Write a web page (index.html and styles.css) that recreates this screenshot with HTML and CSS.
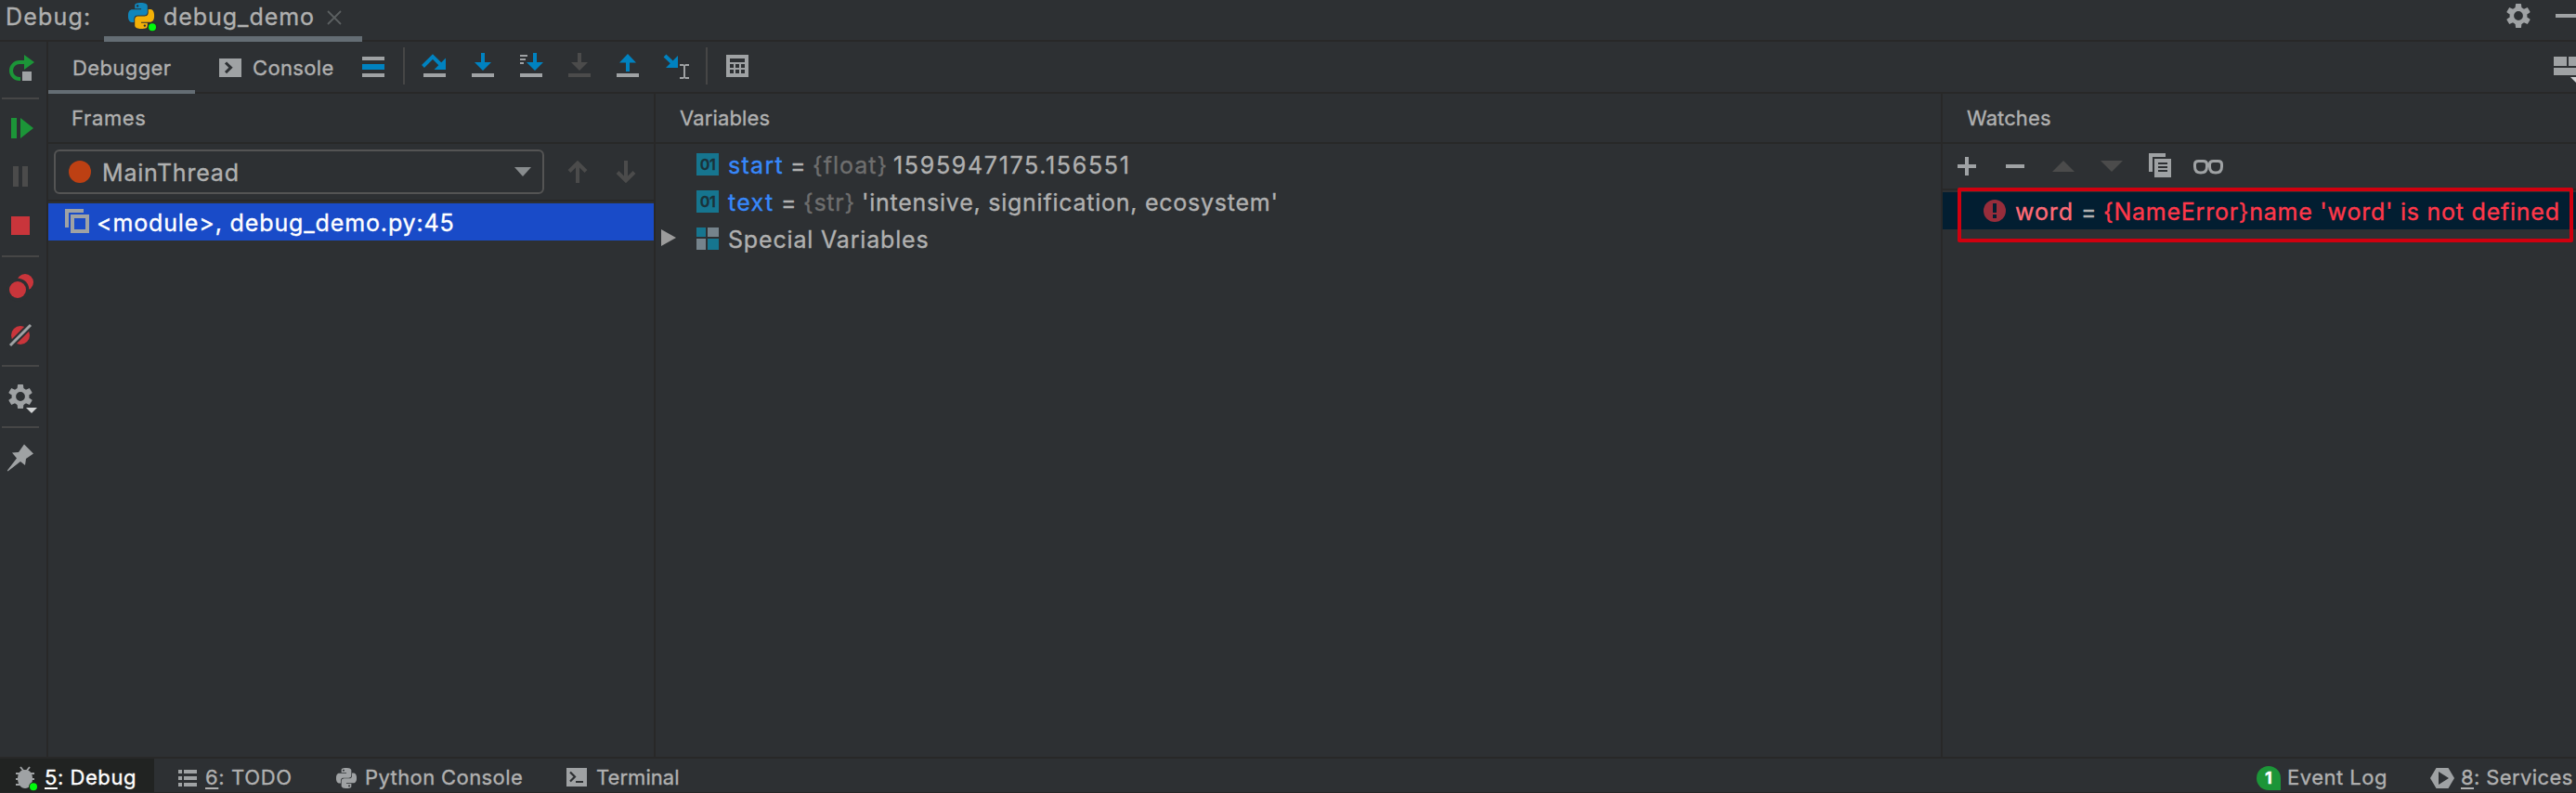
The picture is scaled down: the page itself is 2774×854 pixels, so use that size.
FILE: index.html
```
<!DOCTYPE html>
<html lang="en">
<head>
<meta charset="utf-8">
<title>Debug</title>
<link rel="stylesheet" href="styles.css">
</head>
<body>
<svg class="defs" width="0" height="0">
  <defs>
    <path id="snake" d="M14.25.18l.9.2.73.26.59.3.45.32.34.34.25.34.16.33.1.3.04.26.02.2-.01.13V8.5l-.05.63-.13.55-.21.46-.26.38-.3.31-.33.25-.35.19-.35.14-.33.1-.3.07-.26.04-.21.02H8.77l-.69.05-.59.14-.5.22-.41.27-.33.32-.27.35-.2.36-.15.37-.1.35-.07.32-.04.27-.02.21v3.06H3.17l-.21-.03-.28-.07-.32-.12-.35-.18-.36-.26-.36-.36-.35-.46-.32-.59-.28-.73-.21-.88-.14-1.05-.05-1.23.06-1.22.16-1.04.24-.87.32-.71.36-.57.4-.44.42-.33.42-.24.4-.16.36-.1.32-.05.24-.01h.16l.06.01h8.16v-.83H6.18l-.01-2.75-.02-.37.05-.34.11-.31.17-.28.25-.26.31-.23.38-.2.44-.18.51-.15.58-.12.64-.1.71-.06.77-.04.84-.02 1.27.05zm-6.3 1.98l-.23.33-.08.41.08.41.23.34.33.22.41.09.41-.09.33-.22.23-.34.08-.41-.08-.41-.23-.33-.33-.22-.41-.09-.41.09z"/>
    <g id="gear">
      <circle r="7.2" fill="none" stroke="#9fa2a4" stroke-width="4.6"/>
      <g fill="#9fa2a4">
        <path id="tooth" d="M-3-12.4q0-.6.6-.6h4.8q.6 0 .6.6l.6 5.4h-7.2z"/>
        <use href="#tooth" transform="rotate(60)"/>
        <use href="#tooth" transform="rotate(120)"/>
        <use href="#tooth" transform="rotate(180)"/>
        <use href="#tooth" transform="rotate(240)"/>
        <use href="#tooth" transform="rotate(300)"/>
      </g>
    </g>
  </defs>
</svg>

<div class="window">
  <header class="titlebar">
    <span class="title">Debug:</span>
    <div class="run-tab">
      <svg class="python-run" width="36" height="34" viewBox="138 0 36 34">
        <g transform="translate(138 3) scale(1.1667)">
          <use href="#snake" fill="#1186bb"/>
          <use href="#snake" fill="#f3b007" transform="rotate(180 12 12)"/>
        </g>
        <circle cx="164" cy="29.2" r="5.4" fill="#25312a"/>
        <circle cx="164" cy="29.2" r="4" fill="#00fa0c"/>
      </svg>
      <span class="run-name">debug_demo</span>
      <svg class="close" width="16" height="38" viewBox="352 0 16 38"><path d="M353 12l14 14M367 12l-14 14" stroke="#5b5f61" stroke-width="1.8"/></svg>
    </div>
    <svg class="push" width="84" height="43" viewBox="2690 0 84 43">
      <use href="#gear" transform="translate(2712 17)"/>
      <path fill="#9fa2a4" d="M2752 15h22v4h-22z"/>
    </svg>
  </header>

  <div class="body">
    <nav class="rail">
      <svg width="50" height="60" viewBox="0 45 50 60"><path d="M28 67H21A9 9 0 0 0 21 85h1" fill="none" stroke="#1c9538" stroke-width="4"/><path fill="#1c9538" d="M26 59l11 8-11 8z"/><path fill="#9fa2a4" d="M24 77h10v10H24z"/></svg>
      <i class="rule"></i>
      <svg width="50" height="56" viewBox="0 107 50 56"><path fill="#1c9538" d="M12 127h6v22h-6zM22 127l14 11-14 11z"/></svg>
      <svg width="50" height="54" viewBox="0 163 50 54"><path fill="#4b4b4b" d="M14 179h6v22h-6zM24 179h6v22h-6z"/></svg>
      <svg width="50" height="58" viewBox="0 217 50 58"><path fill="#c9353b" d="M12 233h20v20H12z"/></svg>
      <i class="rule"></i>
      <svg width="50" height="56" viewBox="0 277 50 56"><circle cx="27" cy="304" r="9" fill="#c9353b"/><circle cx="19" cy="312" r="12.3" fill="#2d3033"/><circle cx="19" cy="312" r="9" fill="#c9353b"/></svg>
      <svg width="50" height="60" viewBox="0 333 50 60"><circle cx="22" cy="361" r="10" fill="#c9353b"/><path d="M8 375l28-28" stroke="#2d3033" stroke-width="7"/><path d="M11 372l22-22" stroke="#9fa2a4" stroke-width="3"/></svg>
      <i class="rule"></i>
      <svg width="50" height="64" viewBox="0 395 50 64"><use href="#gear" transform="translate(22 427)"/><path fill="#d0d2d3" d="M28 439h12l-6 6z"/></svg>
      <i class="rule"></i>
      <svg width="50" height="64" viewBox="0 461 50 64"><path fill="#9fa2a4" d="M26 478.500l10 10-8 5.500-1 7-5-4-13.500 10.500-.7-.7L18 493.500l-5-6 7-.5z"/></svg>
    </nav>

    <div class="content">
      <div class="toolbar">
        <div class="tab active">Debugger</div>
        <div class="tab console">
          <svg width="24" height="20" viewBox="236 63 24 20"><path fill="#9fa2a4" d="M236 63h24v20h-24z"/><path d="M243 67.500l5.500 5.300-5.500 5.300" fill="none" stroke="#2d3033" stroke-width="3"/></svg>
          <span>Console</span>
        </div>
        <svg width="54" height="54" viewBox="380 45 54 54"><path fill="#9fa2a4" d="M390 61h24v4h-24zM390 79h24v4h-24z"/><path fill="#0082c0" d="M390 69h24v6h-24z"/></svg>
        <i class="vrule"></i>
        <svg width="60" height="54" viewBox="436 45 60 54"><path fill="#9fa2a4" d="M456 79h24v4h-24z"/><path d="M455.500 71.500L466 61l9 9" fill="none" stroke="#0082c0" stroke-width="4"/><path fill="#0082c0" d="M480 62.500V75h-12.500z"/></svg>
        <svg width="52" height="54" viewBox="496 45 52 54"><path fill="#9fa2a4" d="M508 79h24v4h-24z"/><path fill="#0082c0" d="M518 57h4v10h7l-9 9-9-9h7z"/></svg>
        <svg width="52" height="54" viewBox="548 45 52 54"><path fill="#9fa2a4" d="M560 79h24v4h-24zM560 59h8v2h-8zM560 63h6v2h-6zM560 67h4v2h-4z"/><path fill="#0082c0" d="M574 57h4v10h7l-9 9-9-9h7z"/></svg>
        <svg width="52" height="54" viewBox="600 45 52 54"><path fill="#4b4b4b" d="M612 79h24v4h-24zM622 57h4v10h7l-9 9-9-9h7z"/></svg>
        <svg width="52" height="54" viewBox="652 45 52 54"><path fill="#9fa2a4" d="M664 79h24v4h-24z"/><path fill="#0082c0" d="M674 77h4V67.500h7l-9-9.500-9 9.500h7z"/></svg>
        <svg width="56" height="54" viewBox="704 45 56 54"><path d="M716 60l10 9.500" stroke="#0082c0" stroke-width="4"/><path fill="#0082c0" d="M730 60v13h-13z"/><path fill="#9fa2a4" d="M732 69h4l1 1 1-1h4v2h-4v12h4v2h-4l-1-1-1 1h-4v-2h4V71h-4z"/></svg>
        <i class="vrule"></i>
        <svg width="60" height="54" viewBox="762 45 60 54"><path fill="#9fa2a4" d="M782 59h24v24h-24z"/><path fill="#2d3033" d="M786 63h16v4h-16zM786 69h4v4h-4zM792 69h4v4h-4zM798 69h4v4h-4zM786 75h4v4h-4zM792 75h4v4h-4zM798 75h4v4h-4z"/></svg>
        <svg class="push" width="30" height="54" viewBox="2744 45 30 54"><path fill="#9fa2a4" d="M2750 61h14v10h-14zM2766 61h8v10h-8zM2750 73h24v8h-24z"/><path fill="#d0d2d3" d="M2768 83h12l-6 6z"/></svg>
      </div>

      <div class="panes">
        <section class="pane frames">
          <h2>Frames</h2>
          <div class="thread-row">
            <div class="combo">
              <span class="dot"></span>
              <span class="thread">MainThread</span>
              <svg class="push" width="18" height="10" viewBox="0 0 18 10"><path fill="#888c8e" d="M0 0h18l-9 10z"/></svg>
            </div>
            <svg width="52" height="48" viewBox="596 161 52 48"><path d="M622 197v-21M613 184.500l9-9 9 9" fill="none" stroke="#4b4b4b" stroke-width="4"/></svg>
            <svg width="52" height="48" viewBox="648 161 52 48"><path d="M674 173v21M665 185.500l9 9 9-9" fill="none" stroke="#4b4b4b" stroke-width="4"/></svg>
          </div>
          <div class="frame-row">
            <svg width="26" height="26" viewBox="70 225 26 26"><path fill="#9fa2a4" d="M70 225h20v4H74v16h-4z"/><path d="M78 233h16v16H78z" fill="none" stroke="#9fa2a4" stroke-width="4"/></svg>
            <span class="frame-name">&lt;module&gt;, debug_demo.py:45</span>
          </div>
        </section>

        <section class="pane variables">
          <h2>Variables</h2>
          <div class="var-list">
            <div class="var"><span class="badge">01</span><span class="name start">start</span><span class="eq">=</span><span class="type float">{float}</span><span class="number">1595947175.156551</span></div>
            <div class="var"><span class="badge">01</span><span class="name text">text</span><span class="eq">=</span><span class="type str">{str}</span><span class="string">'intensive, signification, ecosystem'</span></div>
            <div class="var special">
              <svg class="expander" width="38" height="26" viewBox="712 244 38 26"><path fill="#9c9c9c" d="M712 247l16 9-16 9z"/></svg>
              <svg class="group" width="24" height="24" viewBox="0 0 24 24"><path fill="#16758f" d="M0 0h10v10H0zM12 12h12v12H12z"/><path fill="#75838c" d="M12 0h12v10H12zM0 12h10v12H0z"/></svg>
              <span class="special-name">Special Variables</span>
            </div>
          </div>
        </section>

        <section class="pane watches">
          <h2>Watches</h2>
          <div class="watch-tools">
            <svg width="42" height="48" viewBox="2092 155 42 48"><path fill="#9fa2a4" d="M2116 169h4v8h8v4h-8v8h-4v-8h-8v-4h8z"/></svg>
            <svg width="60" height="48" viewBox="2134 155 60 48"><path fill="#9fa2a4" d="M2160 177h20v4h-20z"/></svg>
            <svg width="52" height="48" viewBox="2194 155 52 48"><path fill="#4b4b4b" d="M2222 173l12 12h-24z"/></svg>
            <svg width="52" height="48" viewBox="2246 155 52 48"><path fill="#4b4b4b" d="M2262 173h24l-12 12z"/></svg>
            <svg width="52" height="48" viewBox="2298 155 52 48"><path fill="#9fa2a4" d="M2314 165h18v4h-14v16h-4zM2320 171h18v20h-18z"/><path fill="#2d3033" d="M2324 175h10v2h-10zM2324 179h10v2h-10zM2324 183h10v2h-10z"/></svg>
            <svg width="52" height="48" viewBox="2350 155 52 48"><g fill="none" stroke="#9fa2a4" stroke-width="3"><path d="M2363.500 177q0-3.500 4-3.500h5q4 0 4 3.500v2.500q0 6.500-6.500 6.500t-6.500-6.500zM2379.500 177q0-3.500 4-3.500h5q4 0 4 3.500v2.500q0 6.500-6.500 6.500t-6.500-6.500zM2376 177h4"/></g></svg>
          </div>
          <div class="watch-row">
            <svg width="24" height="24" viewBox="2136 215 24 24"><circle cx="2148" cy="227" r="12" fill="#972d3b"/><path fill="#021e31" d="M2146 219h4v10h-4zM2146 231h4v4h-4z"/></svg>
            <span class="word">word</span><span class="eq">=</span><span class="error">{NameError}name 'word' is not defined</span>
            <span class="marker"></span>
          </div>
        </section>
      </div>
    </div>
  </div>

  <footer class="statusbar">
    <div class="status-item selected">
      <svg width="28" height="28" viewBox="14 824 28 28"><g fill="none" stroke="#9fa2a4" stroke-width="2"><path d="M22 826l4 5M32 826l-4 5M17 833h5l2 2M17 839h20M17 845h5l2-2M37 833h-5"/></g><path fill="#9fa2a4" d="M27 829c6 0 8 4.500 8 9.500 0 6-3.500 10.500-8 10.500s-8-4.500-8-10.500c0-5 2-9.500 8-9.500z"/><circle cx="36" cy="847.300" r="5" fill="#212622"/><circle cx="36" cy="847.300" r="4" fill="#00fa0c"/></svg>
      <span class="label debug"><u>5</u>: Debug</span>
    </div>
    <div class="status-item todo">
      <svg width="20" height="18" viewBox="0 0 20 18"><path fill="#9fa2a4" d="M0 0h4v4H0zM6 0h14v4H6zM0 7h4v4H0zM6 7h14v4H6zM0 14h4v4H0zM6 14h14v4H6z"/></svg>
      <span class="label"><u>6</u>: TODO</span>
    </div>
    <div class="status-item pyconsole">
      <svg width="22" height="22" viewBox="0 0 24 24" fill="#9fa2a4"><use href="#snake"/><use href="#snake" transform="rotate(180 12 12)"/></svg>
      <span class="label">Python Console</span>
    </div>
    <div class="status-item terminal">
      <svg width="22" height="20" viewBox="0 0 22 20"><path fill="#9fa2a4" d="M0 0h22v20H0z"/><path d="M4 4.500l5 5-5 5M10 15h8" fill="none" stroke="#2d3033" stroke-width="2.200"/></svg>
      <span class="label">Terminal</span>
    </div>
    <div class="status-item event push">
      <span class="count">1</span>
      <span class="label">Event Log</span>
    </div>
    <div class="status-item services">
      <svg width="26" height="22" viewBox="0 0 26 22"><path fill="#9fa2a4" d="M6.500 0h13L26 11l-6.500 11h-13L0 11z"/><path fill="#2d3033" d="M9 4l11 7-11 7z"/></svg>
      <span class="label"><u>8</u>: Services</span>
    </div>
  </footer>
</div>
</body>
</html>
```

FILE: styles.css
```
* { box-sizing: border-box; }
body { margin: 0; background: #2d3033; }
svg { display: block; flex: none; }
.defs { position: absolute; }
.push { margin-left: auto; }

.window {
  width: 2774px; height: 854px; overflow: hidden;
  display: flex; flex-direction: column;
  background: #2d3033; color: #b0b0b0;
  font: 25px/36px Inter, "Liberation Sans", sans-serif;
  -webkit-text-stroke: .35px currentColor;
  white-space: nowrap;
}

/* title bar */
.titlebar { height: 45px; flex: none; display: flex; border-bottom: 2px solid #282828; }
.title { width: 112px; padding-left: 6px; letter-spacing: 1.2px; }
.run-tab { width: 278px; height: 45px; display: flex; padding-left: 26px; border-bottom: 6px solid #646d74; }
.run-name { width: 176px; margin-left: 2px; letter-spacing: .95px; }

.body { flex: 1; min-height: 0; display: flex; border-bottom: 2px solid #282828; }

/* left tool strip */
.rail { width: 52px; flex: none; border-right: 2px solid #282828; display: flex; flex-direction: column; }
.rule { width: 40px; height: 2px; margin-left: 2px; background: #464646; flex: none; }

.content { flex: 1; min-width: 0; display: flex; flex-direction: column; }

/* debugger toolbar */
.toolbar { height: 56px; flex: none; display: flex; border-bottom: 2px solid #282828; font-size: 22px; }
.tab { height: 56px; line-height: 56px; }
.tab.active { width: 158px; padding-left: 26px; letter-spacing: .4px; border-bottom: 4px solid #646d74; }
.tab.console { width: 170px; padding-left: 26px; display: flex; gap: 12px; letter-spacing: .35px; }
.tab.console svg { margin-top: 18px; }
.vrule { width: 2px; height: 40px; margin-top: 6px; background: #464646; flex: none; }

/* panes */
.panes { flex: 1; min-height: 0; display: flex; }
.pane { border-right: 2px solid #282828; flex: none; }
.frames { width: 654px; }
.variables { width: 1386px; }
.watches { flex: 1; border-right: 0; }
.pane h2 { margin: 0; height: 54px; font-size: 22px; font-weight: 400; line-height: 52px; padding-left: 25px; border-bottom: 2px solid #282828; letter-spacing: .65px; }
.variables h2 { padding-left: 26px; letter-spacing: .15px; }
.watches h2 { padding-left: 26px; letter-spacing: .1px; }

/* frames */
.thread-row { height: 62px; padding: 6px 0 0 6px; display: flex; border-bottom: 2px solid #282828; }
.combo { width: 528px; height: 48px; margin-right: 10px; padding: 0 12px 0 14px; display: flex; align-items: center; border: 2px solid #545454; border-radius: 6px; }
.dot { width: 24px; height: 24px; border-radius: 50%; background: #bd4013; }
.thread { margin: 2px 0 0 12px; letter-spacing: .8px; }
.frame-row { height: 40px; margin-top: 2px; padding: 6px 0 0 18px; display: flex; background: #194bc8; color: #fff; }
.frame-name { margin: -3px 0 0 8px; letter-spacing: .87px; }

/* variables */
.var-list { padding: 2px 0 0 6px; line-height: 42px; }
.var { height: 40px; display: flex; }
.badge { width: 24px; height: 24px; margin: 8px 10px 0 38px; flex: none; background: #16758f; color: #1b3139; font-size: 16px; font-weight: 600; line-height: 24px; text-align: center; letter-spacing: -.3px; }
.name { color: #3788fb; letter-spacing: 1.3px; }
.name.start { width: 67px; }
.name.text { width: 57px; }
.eq { width: 24px; }
.type { color: #6e6e6e; }
.type.float { width: 87px; letter-spacing: 1px; }
.type.str { width: 63px; letter-spacing: .75px; }
.number { letter-spacing: 1.68px; }
.string { letter-spacing: .75px; }
.expander { margin-top: 7px; }
.group { margin-top: 8px; }
.special-name { margin-left: 10px; letter-spacing: .83px; }

/* watches */
.watch-tools { height: 50px; display: flex; border-bottom: 2px solid #282828; }
.watch-row { position: relative; height: 40px; margin-top: 2px; padding: 8px 0 0 44px; display: flex; background: #021e31; line-height: 26px; }
.word { width: 71px; margin-left: 10px; color: #ff6b77; letter-spacing: .93px; }
.error { color: #ff384a; letter-spacing: .76px; }
.marker { position: absolute; left: 16px; top: -5px; width: 663px; height: 59px; border: 4px solid #d0000f; border-radius: 2px; }

/* status bar */
.statusbar { height: 37px; flex: none; display: flex; border-bottom: 1px solid #262626; font-size: 22px; line-height: 40px; }
.status-item { height: 36px; display: flex; }
.label { letter-spacing: .4px; }
.label u { text-decoration-thickness: 2px; text-underline-offset: 3px; }
.selected { width: 166px; padding-left: 14px; background: #212322; color: #fff; }
.selected svg { margin-top: 7px; }
.debug { margin-left: 6px; letter-spacing: .55px; }
.todo { width: 196px; padding-left: 26px; }
.todo svg { margin-top: 12px; }
.todo .label { margin-left: 9px; letter-spacing: .65px; }
.pyconsole { width: 248px; }
.pyconsole svg { margin-top: 10px; }
.pyconsole .label { margin-left: 9px; }
.terminal svg { margin-top: 10px; }
.terminal .label { margin-left: 10px; letter-spacing: .05px; }
.event { width: 187px; }
.count { width: 26px; height: 26px; margin: 8px 7px 0 0; background: #1c9538; border-radius: 13px 13px 0 13px; color: #fff; font-size: 18px; font-weight: 700; line-height: 26px; text-align: center; }
.event .label { letter-spacing: .5px; }
.services { width: 157px; }
.services svg { margin-top: 10px; }
.services .label { margin-left: 7px; }
```
